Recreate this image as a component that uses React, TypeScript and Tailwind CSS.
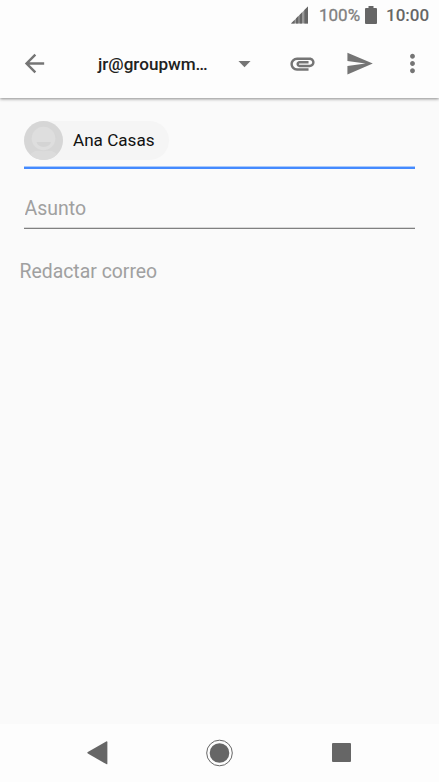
import React, { useState } from "react";

function IconButton({
  label,
  className,
  path,
}: {
  label: string;
  className: string;
  path: string;
}) {
  return (
    <button aria-label={label} className={`shrink-0 text-[#757575] ${className}`}>
      <svg className="size-[29px]" viewBox="0 0 24 24" fill="currentColor">
        <path d={path} />
      </svg>
    </button>
  );
}

function StatusBar() {
  return (
    <div className="flex h-[30px] items-center justify-end pr-[10px] text-[17px] leading-[30px] text-[#666]">
      <svg className="h-[18px] w-[18px]" viewBox="0 0 18 18" fill="#666">
        <path d="M0 17.5L17 .5v17z" fill="#999" />
        <path d="M0 17.5l3.6-3.6v3.6zM5 12.5l2.4-2.4v7.4H5zM8.6 8.9L11 6.5v11H8.6zM13.4 4.1L17 .5v17h-3.6z" />
      </svg>
      <span className="ml-[10px] w-[42px] whitespace-nowrap text-[#808080] [-webkit-text-stroke:0.3px_#808080]">
        100%
      </span>
      <svg className="ml-[4px] h-[18px] w-[12px]" viewBox="0 0 12 18" fill="#666">
        <path d="M3.5 0h5v2H11a1 1 0 0 1 1 1v14a1 1 0 0 1-1 1H1a1 1 0 0 1-1-1V3a1 1 0 0 1 1-1h2.5z" />
      </svg>
      <span className="ml-[9px] w-[43px] whitespace-nowrap font-medium">10:00</span>
    </div>
  );
}

function Header() {
  return (
    <div className="flex h-[68px] items-center pb-[2px] pl-5">
      <IconButton
        label="Atrás"
        className=""
        path="M20 11H7.83l5.59-5.59L12 4l-8 8 8 8 1.41-1.41L7.83 13H20v-2z"
      />
      <button className="ml-[49px] flex items-center text-[#212121]">
        <span className="w-[112px] pt-[3px] text-left text-[17.1px] font-medium whitespace-nowrap">
          jr@groupwm…
        </span>
        <svg className="ml-[19.5px] size-[29px]" viewBox="0 0 24 24" fill="#757575">
          <path d="M7 10l5 5 5-5z" />
        </svg>
      </button>
      <IconButton
        label="Adjuntar"
        className="ml-[29.5px]"
        path="M2 12.5C2 9.46 4.46 7 7.5 7H18c2.21 0 4 1.79 4 4s-1.79 4-4 4H9.5C8.12 15 7 13.88 7 12.5S8.12 10 9.5 10H17v2H9.41c-.55 0-.55 1 0 1H18c1.1 0 2-.9 2-2s-.9-2-2-2H7.5C5.57 9 4 10.57 4 12.5S5.57 16 7.5 16H17v2H7.5C4.46 18 2 15.54 2 12.5z"
      />
      <IconButton
        label="Enviar"
        className="ml-[28px]"
        path="M2.01 21L23 12 2.01 3 2 10l15 2-15 2z"
      />
      <IconButton
        label="Más opciones"
        className="ml-[23.5px]"
        path="M12 8c1.1 0 2-.9 2-2s-.9-2-2-2-2 .9-2 2 .9 2 2 2zm0 2c-1.1 0-2 .9-2 2s.9 2 2 2 2-.9 2-2-.9-2-2-2zm0 6c-1.1 0-2 .9-2 2s.9 2 2 2 2-.9 2-2-.9-2-2-2z"
      />
    </div>
  );
}

function ContactChip({ name }: { name: string }) {
  return (
    <div className="flex h-[39px] w-[145px] items-center rounded-full bg-[#f5f5f5]">
      <svg className="size-[39px]" viewBox="0 0 39 39">
        <clipPath id="avatar">
          <circle cx="19.5" cy="19.5" r="19.5" />
        </clipPath>
        <g clipPath="url(#avatar)">
          <rect width="39" height="39" fill="#d6d6d6" />
          <path d="M4 39c1-5 3-8 8-9h15c5 1 7 4 8 9z" fill="#dbdbdb" />
          <circle cx="19.5" cy="17.5" r="12.8" fill="#d6d6d6" />
          <circle cx="19.5" cy="17.5" r="11.8" fill="#dedede" />
          <path d="M12.5 21h14.5a7.3 5.6 0 0 1-14.5 0z" fill="#d4d4d4" />
        </g>
      </svg>
      <span className="ml-[10px] pt-px text-[17.1px] whitespace-nowrap text-[#111]">{name}</span>
    </div>
  );
}

function NavigationBar() {
  return (
    <div className="flex h-[58px] items-center bg-[#fdfdfd] pb-px text-[#666]">
      <button aria-label="Volver" className="ml-[87px]">
        <svg className="h-6 w-[21px]" viewBox="0 0 21 24" fill="currentColor">
          <path d="M.8 11.1L19.2.5q1.2-.5 1.2.7v21.2q0 1.2-1.2.7L.8 12.5q-.9-.7 0-1.4z" />
        </svg>
      </button>
      <button aria-label="Inicio" className="ml-[98px]">
        <svg className="size-7" viewBox="0 0 28 28">
          <circle cx="13.5" cy="14" r="12.8" fill="none" stroke="currentColor" strokeWidth="1" />
          <circle cx="13.5" cy="14" r="9.8" fill="currentColor" />
        </svg>
      </button>
      <button aria-label="Recientes" className="ml-[98px] size-[19px] rounded-[1px] bg-[#666]" />
    </div>
  );
}

function App() {
  const [subject, setSubject] = useState("");
  const [message, setMessage] = useState("");

  return (
    <div className="flex h-screen w-full flex-col overflow-hidden bg-[#fafafa] font-['Roboto',sans-serif]">
      <div className="relative bg-[#fdfdfd] shadow-[0_1px_3px_rgba(0,0,0,0.45)]">
        <StatusBar />
        <Header />
      </div>
      <div className="flex flex-1 flex-col px-6 pt-[23px]">
        <div className="border-b-[2px] border-[#448aff] pb-[7px] shadow-[inset_0_-1px_0_#a9c9fb]">
          <ContactChip name="Ana Casas" />
        </div>
        <input
          className="h-[60px] border-b border-[#808080] pt-[21px] pb-[2px] pl-[0.5px] text-[19.5px] shadow-[inset_0_-1px_0_#d8d8d8] outline-none placeholder:text-[#a0a0a0]"
          placeholder="Asunto"
          value={subject}
          onChange={(e) => setSubject(e.target.value)}
        />
        <textarea
          className="mt-[30px] -ml-[4.5px] flex-1 resize-none text-[19.4px] leading-[26px] outline-none placeholder:text-[#a0a0a0]"
          placeholder="Redactar correo"
          value={message}
          onChange={(e) => setMessage(e.target.value)}
        />
      </div>
      <NavigationBar />
    </div>
  );
}

export default App;
